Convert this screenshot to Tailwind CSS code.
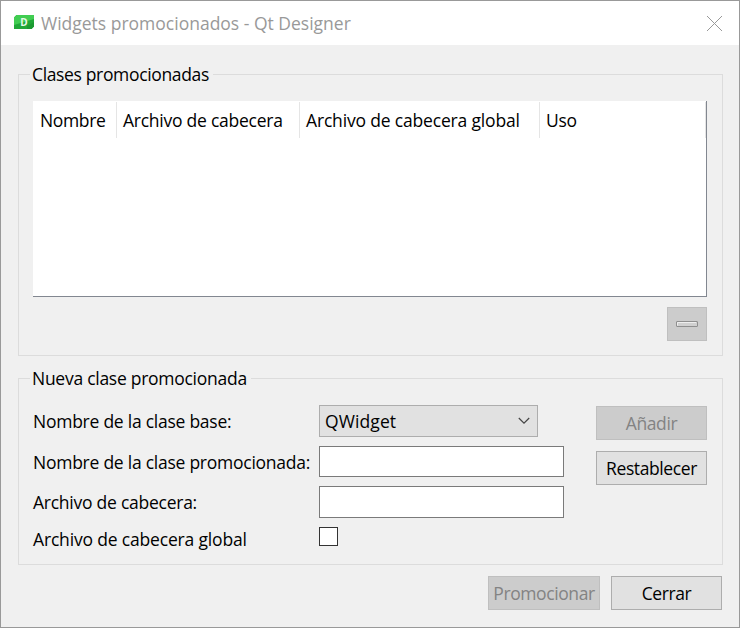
<!DOCTYPE html>
<html lang="es">
<head>
<meta charset="utf-8">
<title>Widgets promocionados - Qt Designer</title>
<script src="https://cdn.jsdelivr.net/npm/@tailwindcss/browser@4"></script>
</head>
<body class="w-[740px] h-[628px] overflow-hidden">
<div class="w-[740px] h-[628px] border border-[#999999] bg-[#f0f0f0] flex flex-col font-['Open_Sans','Noto_Sans',sans-serif] text-[17.5px] leading-6 text-black whitespace-nowrap">
  <header class="h-11 shrink-0 bg-white flex items-center pl-[13px] pr-[17px] text-[#999999]">
    <svg class="w-5 h-[14px] mr-[7px] -mt-0.5 shrink-0" viewBox="0 0 20 14">
      <path d="M2.5 0H20V11.5L17.5 14H0V2.5Z" fill="#21a838"/>
      <path d="M2.5 0H20V4L0 10V2.5Z" fill="#41cd52"/>
      <path d="M13 11L20 7V11.5L17.5 14H13Z" fill="#1c9a31"/>
      <text x="10" y="11" text-anchor="middle" font-family="Open Sans" font-weight="700" font-size="10" fill="#e6f8e9">D</text>
    </svg>
    <h1>Widgets promocionados - Qt Designer</h1>
    <svg class="ml-auto w-[15px] h-[15px]" viewBox="0 0 15 15" fill="none" stroke="#999999"><path d="M0 0L15 15M15 0L0 15"/></svg>
  </header>

  <main class="px-[17px] pt-[29px]">
    <section class="w-[705px] h-[282px] border border-[#dcdcdc] px-[14px]">
      <h2 class="w-fit -mt-[13px] -ml-[3px] pl-0.5 pr-1 bg-[#f0f0f0] tracking-[-0.35px]">Clases promocionadas</h2>
      <div class="mt-[15px] w-[674px] h-[196px] pt-px bg-white border-r border-b border-[#828790]">
        <div class="h-9 grid grid-cols-[84px_183px_240px_166px] leading-9">
          <div class="border-r border-[#e5e5e5] pl-[7px] tracking-[-0.35px]">Nombre</div>
          <div class="border-r border-[#e5e5e5] pl-[6px] tracking-[-0.25px]">Archivo de cabecera</div>
          <div class="border-r border-[#e5e5e5] pl-[6px] tracking-[-0.17px]">Archivo de cabecera global</div>
          <div class="border-r border-[#e5e5e5] pl-[6px] tracking-[-0.3px]">Uso</div>
        </div>
      </div>
      <button class="mt-[10px] ml-[634px] w-10 h-[34px] bg-[#cccccc] border border-[#bfbfbf] flex items-center justify-center">
        <svg class="w-[22px] h-[6px]" viewBox="0 0 22 6"><rect x=".5" y=".5" width="21" height="5" rx=".5" fill="#d0d0d0" stroke="#8f8f8f"/><path d="M1.5 4.5V1.5H20" stroke="#eeeeee" fill="none"/></svg>
      </button>
    </section>

    <section class="mt-[22px] w-[705px] h-[187px] border border-[#dcdcdc] px-[14px]">
      <h2 class="w-fit -mt-[13px] -ml-[3px] pl-0.5 pr-1 bg-[#f0f0f0] tracking-[-0.27px]">Nueva clase promocionada</h2>
      <div class="mt-[15px] flex">
        <div class="w-[563px] grid grid-cols-[286px_245px] grid-rows-[32px_31px_32px_19px] gap-y-[9px] items-center tracking-[-0.25px]">
          <label>Nombre de la clase base:</label>
          <div class="w-[219px] h-8 bg-[#e1e1e1] border border-[#adadad] flex items-center justify-between pl-[5px] pr-[7px] tracking-[0.1px]">
            <span>QWidget</span>
            <svg class="w-3 h-2" viewBox="0 0 12 8" fill="none" stroke="#444444" stroke-width="1.2"><path d="M.8 1L6 6.2L11.2 1"/></svg>
          </div>
          <label class="pt-px">Nombre de la clase promocionada:</label>
          <input class="w-[245px] h-[31px] bg-white border border-[#7a7a7a]">
          <label>Archivo de cabecera:</label>
          <input class="w-[245px] h-8 bg-white border border-[#7a7a7a]">
          <label class="pt-1 tracking-[-0.17px]">Archivo de cabecera global</label>
          <div class="w-[19px] h-[19px] bg-white border border-[#333333]"></div>
        </div>
        <div class="pt-px flex flex-col gap-[11px] tracking-[-0.4px]">
          <button class="w-[111px] h-[34px] bg-[#cccccc] border border-[#bfbfbf] text-[#838383]">Añadir</button>
          <button class="w-[111px] h-[34px] bg-[#e1e1e1] border border-[#adadad]">Restablecer</button>
        </div>
      </div>
    </section>

    <footer class="mt-[11px] flex justify-end gap-[11px] w-[704px] tracking-[-0.4px]">
      <button class="w-28 h-[34px] bg-[#cccccc] border border-[#bfbfbf] text-[#838383]">Promocionar</button>
      <button class="w-[111px] h-[34px] bg-[#e1e1e1] border border-[#adadad]">Cerrar</button>
    </footer>
  </main>
</div>
</body>
</html>
